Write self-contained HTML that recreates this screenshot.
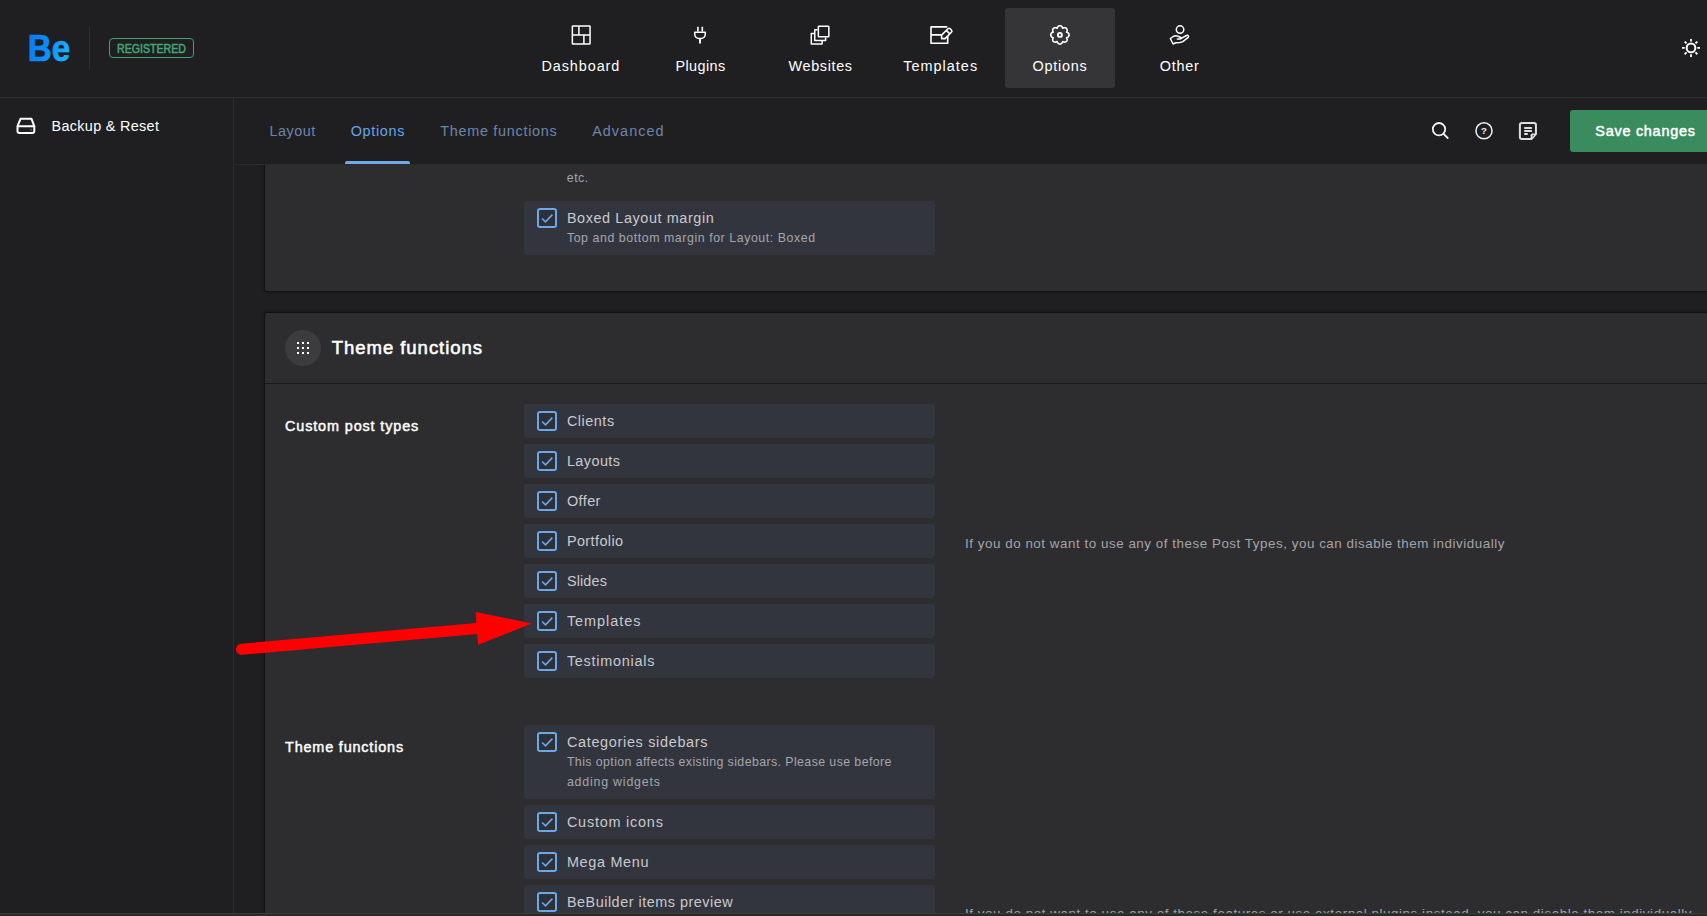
<!DOCTYPE html>
<html lang="en">
<head>
<meta charset="utf-8">
<title>Betheme Options - Theme functions</title>
<style>
html,body{margin:0;padding:0}
body{width:1707px;height:916px;overflow:hidden;background:#1f1f21;position:relative;font-family:"Liberation Sans",sans-serif}
.b{position:absolute}
.t{position:absolute;white-space:nowrap;line-height:20px;height:20px}
.row{position:absolute;left:524px;width:411px;height:34px;border-radius:3px;background:#33353e}
.cb{position:absolute;left:537px;width:16px;height:16px;border:2px solid #6aa8e8;border-radius:3px;background:#2e3038}
#ico{position:absolute;left:0;top:0}
#app{position:absolute;left:0;top:0;width:1707px;height:916px;overflow:hidden}
</style>
</head>
<body>
<div id="app">
<!-- header -->
<div class="b" style="left:0;top:97px;width:1707px;height:1px;background:#2e2e31"></div>
<div class="b" style="left:89px;top:27px;width:1px;height:42px;background:#2e2e31"></div>
<div class="b" style="left:109px;top:38px;width:83px;height:18px;border:1px solid #45a072;border-radius:4px"></div>
<div class="b" style="left:1005px;top:8px;width:110px;height:80px;border-radius:3px;background:#353537"></div>
<!-- sidebar -->
<div class="b" style="left:233px;top:98px;width:1px;height:815px;background:#2c2c2f"></div>
<!-- content cards -->
<div class="b" style="left:264px;top:150px;width:1460px;height:140px;background:#2d2d30;border:1px solid #111113;border-radius:3px;box-shadow:0 0 4px rgba(0,0,0,.3)"></div>
<div class="b" style="left:264px;top:312px;width:1460px;height:640px;background:#2d2d30;border:1px solid #111113;border-radius:3px;box-shadow:0 0 4px rgba(0,0,0,.3)"></div>
<div class="b" style="left:265px;top:383px;width:1460px;height:1px;background:#19191b"></div>
<div class="b" style="left:285px;top:330px;width:36px;height:36px;border-radius:50%;background:#3c3c3f"></div>
<!-- sub header (covers scrolled card) -->
<div class="b" style="left:234px;top:98px;width:1473px;height:66px;background:#1f1f21"></div>
<div class="b" style="left:234px;top:164px;width:1473px;height:1px;background:#2b2b2e"></div>
<div class="b" style="left:345px;top:161px;width:65px;height:3px;border-radius:2px 2px 0 0;background:#6eaae6"></div>
<div class="b" style="left:1570px;top:110px;width:150px;height:42px;border-radius:3px;background:#3a8b5d"></div>
<!-- rows -->
<div class="row" style="top:201px;height:54px"></div><div class="cb" style="top:208px"></div>
<div class="row" style="top:404px"></div><div class="cb" style="top:411px"></div>
<div class="row" style="top:444px"></div><div class="cb" style="top:451px"></div>
<div class="row" style="top:484px"></div><div class="cb" style="top:491px"></div>
<div class="row" style="top:524px"></div><div class="cb" style="top:531px"></div>
<div class="row" style="top:564px"></div><div class="cb" style="top:571px"></div>
<div class="row" style="top:604px"></div><div class="cb" style="top:611px"></div>
<div class="row" style="top:644px"></div><div class="cb" style="top:651px"></div>
<div class="row" style="top:725px;height:74px"></div><div class="cb" style="top:732px"></div>
<div class="row" style="top:805px"></div><div class="cb" style="top:812px"></div>
<div class="row" style="top:845px"></div><div class="cb" style="top:852px"></div>
<div class="row" style="top:885px"></div><div class="cb" style="top:892px"></div>
<div class="t" style="left:117.00px;top:38.67px;font-size:12.2px;color:#47a375;transform:scaleX(0.8696);transform-origin:0 0;-webkit-text-stroke:0.55px #47a375;">REGISTERED</div>
<div class="t" style="left:541.45px;top:56.10px;font-size:14.42px;color:#ffffff;letter-spacing:0.927px;">Dashboard</div>
<div class="t" style="left:675.50px;top:56.10px;font-size:14.42px;color:#ffffff;letter-spacing:0.392px;">Plugins</div>
<div class="t" style="left:788.55px;top:56.10px;font-size:14.42px;color:#ffffff;letter-spacing:0.645px;">Websites</div>
<div class="t" style="left:903.30px;top:56.10px;font-size:14.42px;color:#ffffff;letter-spacing:1.016px;">Templates</div>
<div class="t" style="left:1032.60px;top:56.10px;font-size:14.42px;color:#ffffff;letter-spacing:0.724px;">Options</div>
<div class="t" style="left:1159.75px;top:56.10px;font-size:14.42px;color:#ffffff;letter-spacing:0.767px;">Other</div>
<div class="t" style="left:51.60px;top:116.00px;font-size:14.42px;color:#ffffff;letter-spacing:0.307px;">Backup &amp; Reset</div>
<div class="t" style="left:269.50px;top:120.90px;font-size:14.42px;color:#6d85aa;letter-spacing:0.487px;">Layout</div>
<div class="t" style="left:350.70px;top:120.90px;font-size:14.42px;color:#65a5e8;letter-spacing:0.674px;">Options</div>
<div class="t" style="left:440.20px;top:120.90px;font-size:14.42px;color:#6d85aa;letter-spacing:0.721px;">Theme functions</div>
<div class="t" style="left:592.20px;top:120.90px;font-size:14.42px;color:#6d85aa;letter-spacing:1.032px;">Advanced</div>
<div class="t" style="left:1595.30px;top:120.70px;font-size:14.42px;color:#ffffff;letter-spacing:0.753px;-webkit-text-stroke:0.5px #ffffff;">Save changes</div>
<div class="t" style="left:566.80px;top:168.32px;font-size:12.36px;color:#a3a5ac;letter-spacing:0.493px;">etc.</div>
<div class="t" style="left:566.90px;top:208.10px;font-size:14.42px;color:#c9c9cd;letter-spacing:0.597px;">Boxed Layout margin</div>
<div class="t" style="left:566.90px;top:227.92px;font-size:12.36px;color:#a3a5ac;letter-spacing:0.565px;">Top and bottom margin for Layout: Boxed</div>
<div class="t" style="left:331.70px;top:338.28px;font-size:18.54px;color:#ffffff;letter-spacing:0.957px;-webkit-text-stroke:0.55px #ffffff;">Theme functions</div>
<div class="t" style="left:285.00px;top:415.90px;font-size:14.42px;color:#ffffff;letter-spacing:0.874px;-webkit-text-stroke:0.45px #ffffff;">Custom post types</div>
<div class="t" style="left:285.00px;top:736.90px;font-size:14.42px;color:#ffffff;letter-spacing:0.829px;-webkit-text-stroke:0.45px #ffffff;">Theme functions</div>
<div class="t" style="left:566.90px;top:410.90px;font-size:14.42px;color:#c9c9cd;letter-spacing:0.526px;">Clients</div>
<div class="t" style="left:566.90px;top:450.90px;font-size:14.42px;color:#c9c9cd;letter-spacing:0.439px;">Layouts</div>
<div class="t" style="left:566.90px;top:490.90px;font-size:14.42px;color:#c9c9cd;letter-spacing:0.434px;">Offer</div>
<div class="t" style="left:566.90px;top:530.90px;font-size:14.42px;color:#c9c9cd;letter-spacing:0.418px;">Portfolio</div>
<div class="t" style="left:566.90px;top:570.90px;font-size:14.42px;color:#c9c9cd;letter-spacing:0.150px;">Slides</div>
<div class="t" style="left:566.90px;top:610.90px;font-size:14.42px;color:#c9c9cd;letter-spacing:0.979px;">Templates</div>
<div class="t" style="left:566.90px;top:650.90px;font-size:14.42px;color:#c9c9cd;letter-spacing:0.749px;">Testimonials</div>
<div class="t" style="left:566.90px;top:731.90px;font-size:14.42px;color:#c9c9cd;letter-spacing:0.693px;">Categories sidebars</div>
<div class="t" style="left:566.90px;top:751.62px;font-size:12.36px;color:#a3a5ac;letter-spacing:0.409px;">This option affects existing sidebars. Please use before</div>
<div class="t" style="left:566.90px;top:771.62px;font-size:12.36px;color:#a3a5ac;letter-spacing:0.810px;">adding widgets</div>
<div class="t" style="left:566.90px;top:811.90px;font-size:14.42px;color:#c9c9cd;letter-spacing:0.793px;">Custom icons</div>
<div class="t" style="left:566.90px;top:851.90px;font-size:14.42px;color:#c9c9cd;letter-spacing:0.690px;">Mega Menu</div>
<div class="t" style="left:566.90px;top:891.90px;font-size:14.42px;color:#c9c9cd;letter-spacing:0.512px;">BeBuilder items preview</div>
<div class="t" style="left:965.00px;top:534.06px;font-size:13.39px;color:#a3a3a9;letter-spacing:0.536px;">If you do not want to use any of these Post Types, you can disable them individually</div>
<div class="t" style="left:965.00px;top:903.66px;font-size:13.39px;color:#a3a3a9;letter-spacing:0.566px;">If you do not want to use any of these features or use external plugins instead, you can disable them individually</div>
<!-- icons -->
<svg id="ico" width="1707" height="916" viewBox="0 0 1707 916" fill="none" stroke="#fff" stroke-width="1.5">
<defs><linearGradient id="lg" x1="0" y1="0" x2="1" y2="0.35"><stop offset="0" stop-color="#0a76ee"/><stop offset="0.5" stop-color="#0a8cf8"/><stop offset="1" stop-color="#1cacff"/></linearGradient></defs>
<text transform="translate(27.8 60.8) scale(0.895 1)" font-family="Liberation Sans, sans-serif" font-size="37" font-weight="700" fill="url(#lg)" stroke="url(#lg)" stroke-width="0.7" stroke-linejoin="round">Be</text>
<rect x="572.35" y="25.95" width="17.7" height="18.1" rx="0.6"/>
<path d="M572.35 34.9H590.05M578.9 25.95V34.9M583.9 34.9V44.05"/>
<path d="M697.9 26.8V31.6M702.3 26.8V31.6" stroke-width="1.6"/>
<path d="M694.75 32.2H705.25V34.3A4.2 4.2 0 0 1 701.05 38.5H698.95A4.2 4.2 0 0 1 694.75 34.3Z" stroke-linejoin="round"/>
<path d="M700 38.3V43.4" stroke-width="1.9"/>
<rect x="818.35" y="26.25" width="10.5" height="10.5" rx="0.5"/>
<path d="M817.6 29.85H814.75V40.45H825.6V37.5M814 33.45H811.3V44H822.1V41.2" stroke-linejoin="round"/>
<path d="M947.3 26.9H931V43.25H947.7V36M931 34.9H941" stroke-width="1.6" stroke-linejoin="round"/>
<g transform="translate(941.6 38.6) rotate(-45)"><path d="M0 0L2.45 -2.45H11.4A1.6 1.6 0 0 1 13 -0.85V0.85A1.6 1.6 0 0 1 11.4 2.45H2.45ZM9.2 -2.45V2.45" fill="#1f1f21" stroke-width="1.6" stroke-linejoin="round"/></g>
<path d="M1059.90 25.70 L1060.26 25.73 L1060.62 25.81 L1060.96 25.95 L1061.29 26.14 L1061.60 26.38 L1061.88 26.66 L1062.13 26.99 L1062.35 27.35 L1062.54 27.76 L1062.66 28.25 L1063.09 27.99 L1063.50 27.83 L1063.92 27.73 L1064.33 27.68 L1064.73 27.67 L1065.11 27.72 L1065.48 27.82 L1065.82 27.97 L1066.13 28.16 L1066.41 28.39 L1066.64 28.67 L1066.83 28.98 L1066.98 29.32 L1067.08 29.69 L1067.13 30.07 L1067.12 30.47 L1067.07 30.88 L1066.97 31.30 L1066.81 31.71 L1066.55 32.14 L1067.04 32.26 L1067.45 32.45 L1067.81 32.67 L1068.14 32.92 L1068.42 33.20 L1068.66 33.51 L1068.85 33.84 L1068.99 34.18 L1069.07 34.54 L1069.10 34.90 L1069.07 35.26 L1068.99 35.62 L1068.85 35.96 L1068.66 36.29 L1068.42 36.60 L1068.14 36.88 L1067.81 37.13 L1067.45 37.35 L1067.04 37.54 L1066.55 37.66 L1066.81 38.09 L1066.97 38.50 L1067.07 38.92 L1067.12 39.33 L1067.13 39.73 L1067.08 40.11 L1066.98 40.48 L1066.83 40.82 L1066.64 41.13 L1066.41 41.41 L1066.13 41.64 L1065.82 41.83 L1065.48 41.98 L1065.11 42.08 L1064.73 42.13 L1064.33 42.12 L1063.92 42.07 L1063.50 41.97 L1063.09 41.81 L1062.66 41.55 L1062.54 42.04 L1062.35 42.45 L1062.13 42.81 L1061.88 43.14 L1061.60 43.42 L1061.29 43.66 L1060.96 43.85 L1060.62 43.99 L1060.26 44.07 L1059.90 44.10 L1059.54 44.07 L1059.18 43.99 L1058.84 43.85 L1058.51 43.66 L1058.20 43.42 L1057.92 43.14 L1057.67 42.81 L1057.45 42.45 L1057.26 42.04 L1057.14 41.55 L1056.71 41.81 L1056.30 41.97 L1055.88 42.07 L1055.47 42.12 L1055.07 42.13 L1054.69 42.08 L1054.32 41.98 L1053.98 41.83 L1053.67 41.64 L1053.39 41.41 L1053.16 41.13 L1052.97 40.82 L1052.82 40.48 L1052.72 40.11 L1052.67 39.73 L1052.68 39.33 L1052.73 38.92 L1052.83 38.50 L1052.99 38.09 L1053.25 37.66 L1052.76 37.54 L1052.35 37.35 L1051.99 37.13 L1051.66 36.88 L1051.38 36.60 L1051.14 36.29 L1050.95 35.96 L1050.81 35.62 L1050.73 35.26 L1050.70 34.90 L1050.73 34.54 L1050.81 34.18 L1050.95 33.84 L1051.14 33.51 L1051.38 33.20 L1051.66 32.92 L1051.99 32.67 L1052.35 32.45 L1052.76 32.26 L1053.25 32.14 L1052.99 31.71 L1052.83 31.30 L1052.73 30.88 L1052.68 30.47 L1052.67 30.07 L1052.72 29.69 L1052.82 29.32 L1052.97 28.98 L1053.16 28.67 L1053.39 28.39 L1053.67 28.16 L1053.98 27.97 L1054.32 27.82 L1054.69 27.72 L1055.07 27.67 L1055.47 27.68 L1055.88 27.73 L1056.30 27.83 L1056.71 27.99 L1057.14 28.25 L1057.26 27.76 L1057.45 27.35 L1057.67 26.99 L1057.92 26.66 L1058.20 26.38 L1058.51 26.14 L1058.84 25.95 L1059.18 25.81 L1059.54 25.73Z" stroke-width="1.6" stroke-linejoin="round"/>
<circle cx="1059.9" cy="34.9" r="2" stroke-width="1.9"/>
<circle cx="1180.05" cy="29.6" r="3.75"/>
<path d="M1173.1 44L1170.3 38.5L1173.3 36.5C1174.9 35.5 1176.5 35.5 1178.1 36.3L1180.3 37.2C1181.5 37.7 1181.3 39 1180.1 39L1177.4 39M1181.2 38.3L1186.5 35.5C1188.2 34.7 1189.3 36.6 1187.9 37.7L1183.1 41.4C1182.1 42.1 1181.1 42.4 1179.9 42.5L1175.8 42.7L1173.1 44" stroke-linejoin="round" stroke-linecap="round"/>
<circle cx="1691" cy="47.9" r="4.35" stroke-width="2"/>
<path d="M1697.30 47.90L1700.00 47.90M1695.45 52.35L1697.36 54.26M1691.00 54.20L1691.00 56.90M1686.55 52.35L1684.64 54.26M1684.70 47.90L1682.00 47.90M1686.55 43.45L1684.64 41.54M1691.00 41.60L1691.00 38.90M1695.45 43.45L1697.36 41.54" stroke-width="1.8"/>
<path d="M20.6 118.7H31.4L34.3 126.2V131.1A2 2 0 0 1 32.3 133.1H19.5A2 2 0 0 1 17.5 131.1V126.2ZM17.5 126.2H34.3" stroke-width="2" stroke-linejoin="round"/>
<circle cx="31" cy="129.7" r="1" fill="#3e6283" stroke="none"/>
<g stroke="#f0f0f0"><circle cx="1439" cy="129.2" r="6.2" stroke-width="1.8"/><path d="M1443.6 133.8L1447.7 138" stroke-width="1.8" stroke-linecap="round"/>
<circle cx="1484" cy="130.8" r="8.05"/>
<text x="1484" y="134.3" font-family="Liberation Sans, sans-serif" font-size="9.6" font-weight="700" text-anchor="middle" fill="#f0f0f0" stroke="none">?</text></g>
<g stroke="#dedede" stroke-width="2"><path d="M1535.95 134V124.9A2 2 0 0 0 1533.95 122.9H1521.9A2 2 0 0 0 1519.9 124.9V137.1A2 2 0 0 0 1521.9 139.1H1531.4Z" stroke-linejoin="round"/><path d="M1536.6 133.6H1532.2A1.6 1.6 0 0 0 1530.6 135.2V139.8Z" fill="#dedede" stroke="none"/><path d="M1534.3 135.2H1532.6V137Z" fill="#1f1f21" stroke="none"/><path d="M1524.2 128H1531.9M1524.2 131H1531.9M1524.2 134H1527.8" stroke-width="1.8"/></g>
<rect x="297" y="342" width="2" height="2" fill="#fff" stroke="none"/>
<rect x="302" y="342" width="2" height="2" fill="#fff" stroke="none"/>
<rect x="307" y="342" width="2" height="2" fill="#fff" stroke="none"/>
<rect x="297" y="347" width="2" height="2" fill="#fff" stroke="none"/>
<rect x="302" y="347" width="2" height="2" fill="#fff" stroke="none"/>
<rect x="307" y="347" width="2" height="2" fill="#fff" stroke="none"/>
<rect x="297" y="352" width="2" height="2" fill="#fff" stroke="none"/>
<rect x="302" y="352" width="2" height="2" fill="#fff" stroke="none"/>
<rect x="307" y="352" width="2" height="2" fill="#fff" stroke="none"/>
<path d="M542.1 218.5L545.5 221.9L552.4 214.6" stroke="#6aa8e8" stroke-width="1.6"/>
<path d="M542.1 421.5L545.5 424.9L552.4 417.6" stroke="#6aa8e8" stroke-width="1.6"/>
<path d="M542.1 461.5L545.5 464.9L552.4 457.6" stroke="#6aa8e8" stroke-width="1.6"/>
<path d="M542.1 501.5L545.5 504.9L552.4 497.6" stroke="#6aa8e8" stroke-width="1.6"/>
<path d="M542.1 541.5L545.5 544.9L552.4 537.6" stroke="#6aa8e8" stroke-width="1.6"/>
<path d="M542.1 581.5L545.5 584.9L552.4 577.6" stroke="#6aa8e8" stroke-width="1.6"/>
<path d="M542.1 621.5L545.5 624.9L552.4 617.6" stroke="#6aa8e8" stroke-width="1.6"/>
<path d="M542.1 661.5L545.5 664.9L552.4 657.6" stroke="#6aa8e8" stroke-width="1.6"/>
<path d="M542.1 742.5L545.5 745.9L552.4 738.6" stroke="#6aa8e8" stroke-width="1.6"/>
<path d="M542.1 822.5L545.5 825.9L552.4 818.6" stroke="#6aa8e8" stroke-width="1.6"/>
<path d="M542.1 862.5L545.5 865.9L552.4 858.6" stroke="#6aa8e8" stroke-width="1.6"/>
<path d="M542.1 902.5L545.5 905.9L552.4 898.6" stroke="#6aa8e8" stroke-width="1.6"/>
<path d="M241.5 649.2L480 628.3" stroke="#ff0000" stroke-width="11" stroke-linecap="round"/>
<path d="M475.6 611.9L478 644.8L531.8 623.5Z" fill="#ff0000" stroke="none"/>
</svg>
<!-- bottom strip -->
<div class="b" style="left:0;top:913px;width:1707px;height:1px;background:#3b3c39"></div>
<div class="b" style="left:0;top:914px;width:1707px;height:2px;background:#2a2b28"></div>
</div>
</body>
</html>
